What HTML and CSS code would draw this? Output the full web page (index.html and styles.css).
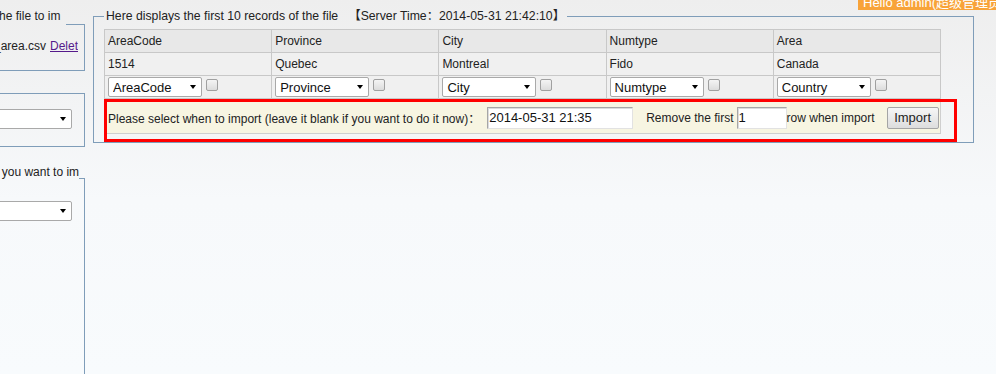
FILE: index.html
```html
<!DOCTYPE html>
<html lang="en">
<head>
    <meta charset="UTF-8">
    <title>Import data</title>
    <link rel="stylesheet" href="styles.css">
</head>
<body>

    <div class="user-bar">Hello admin(超级管理员)</div>

    <div class="layout">
        <!-- 左侧: 选择文件 / 数据表 / 类型 -->
        <div class="side">
            <fieldset class="box box-file">
                <legend>Please select the file to im</legend>
                <div class="file-line">
                    <span>import_area.csv</span>
                    <a href="#" class="del">Delete</a>
                </div>
            </fieldset>

            <fieldset class="box box-table">
                <span class="pick pick-wide">
                    <select><option>area</option></select>
                </span>
            </fieldset>

            <fieldset class="box box-type">
                <legend>Select the type you want to im</legend>
                <span class="pick pick-wide">
                    <select><option>area</option></select>
                </span>
            </fieldset>
        </div>

        <!-- 右侧: 文件预览 -->
        <fieldset class="box preview">
            <legend>Here displays the first 10 records of the file&nbsp;&nbsp;&nbsp;【Server Time：2014-05-31 21:42:10】</legend>

            <table class="grid">
                <tr class="head">
                    <td>AreaCode</td>
                    <td>Province</td>
                    <td>City</td>
                    <td>Numtype</td>
                    <td>Area</td>
                </tr>
                <tr>
                    <td>1514</td>
                    <td>Quebec</td>
                    <td>Montreal</td>
                    <td>Fido</td>
                    <td>Canada</td>
                </tr>
                <tr class="opts">
                    <td><div class="pick-cell"><span class="pick"><select><option>AreaCode</option></select></span><input type="checkbox"></div></td>
                    <td><div class="pick-cell"><span class="pick"><select><option>Province</option></select></span><input type="checkbox"></div></td>
                    <td><div class="pick-cell"><span class="pick"><select><option>City</option></select></span><input type="checkbox"></div></td>
                    <td><div class="pick-cell"><span class="pick"><select><option>Numtype</option></select></span><input type="checkbox"></div></td>
                    <td><div class="pick-cell"><span class="pick"><select><option>Country</option></select></span><input type="checkbox"></div></td>
                </tr>
            </table>

            <div class="import-box">
                <div class="import-bar">
                    <span>Please select when to import (leave it blank if you want to do it now)：</span>
                    <input type="text" class="field time" value="2014-05-31 21:35">
                    <span class="skip">Remove the first</span>
                    <input type="text" class="field rows" value="1">
                    <span>row when import</span>
                    <button class="btn">Import</button>
                </div>
            </div>
        </fieldset>
    </div>

</body>
</html>
```

FILE: styles.css
```css
html, body {
    margin: 0;
    height: 100%;
}

body {
    font-family: "Liberation Sans", "Noto Sans CJK SC", sans-serif;
    font-size: 12px;
    color: #222;
    background: linear-gradient(#eeeeee 0, #f7f9fb 200px, #f8fbfd 100%);
    overflow: hidden;
}

/* 右上角用户条 */
.user-bar {
    position: absolute;
    top: 0;
    right: 0;
    width: 133px;
    height: 10px;
    padding-left: 5px;
    background-color: #f8a339;
    color: #fff;
    font-size: 13px;
    line-height: 5px;
    white-space: nowrap;
    overflow: hidden;
}

.layout {
    display: flex;
    align-items: flex-start;
    gap: 8px;
}

.side {
    flex: none;
    width: 177px;
    margin-left: -92px; /* 左侧栏被截掉一部分 */
}

.box {
    margin: 0;
    border: 1px solid #7f9db9;
    min-inline-size: 0;
}

.box legend {
    padding: 0 2px;
    line-height: 14px;
}

.box-file {
    margin-top: 9px;
    padding: 0 6px 17px 10px;
}

.box-file legend {
    padding: 0 6px 16px 2px;
}

.file-line {
    display: flex;
    justify-content: flex-end;
    gap: 4px;
    line-height: 14px;
    white-space: nowrap;
}

.del {
    display: inline-block;
    width: 28px;
    overflow: hidden;
    color: #551a8b;
}

.box-table {
    margin-top: 22px;
    padding: 15px 12px 17px 10px;
}

.box-type {
    margin-top: 18px;
    padding: 10px 0 0 10px;
    min-height: 220px;
}

.box-type legend {
    padding: 0 0 12px 0;
    white-space: nowrap;
}

.box-type .pick-wide {
    margin-right: 12px;
}

/* 下拉框 */
.pick {
    position: relative;
    display: inline-block;
}

.pick::after {
    content: "";
    position: absolute;
    right: 6px;
    top: 8px;
    border-style: solid;
    border-width: 4px 3px 0 3px;
    border-color: #000 transparent transparent transparent;
    pointer-events: none;
}

.pick select {
    -webkit-appearance: none;
    appearance: none;
    display: block;
    width: 94px;
    height: 20px;
    margin: 0;
    padding: 0 0 0 4px;
    border: 1px solid #a9a9a9;
    border-radius: 2px;
    background-color: #fff;
    font: 13px "Liberation Sans", sans-serif;
    color: #111;
}

.pick-wide {
    display: block;
}

.pick-wide select {
    width: 100%;
}

/* 预览区 */
.preview {
    flex: none;
    width: 881px;
    box-sizing: border-box;
    margin-top: 9px;
    padding: 6px 16px 0 10px;
}

.preview legend {
    font-size: 12.25px;
}

.grid {
    width: 837px;
    border-collapse: collapse;
    table-layout: fixed;
}

.grid td {
    border: 1px solid #c8c8c8;
    padding: 0 3px;
    line-height: 22px;
    background-color: #f0f0f0;
    white-space: nowrap;
}

.grid .head td {
    background-color: #e8e8e8;
}

.grid .opts td {
    padding: 1px 3px;
    line-height: normal;
}

.pick-cell {
    display: flex;
    align-items: flex-start;
    gap: 4px;
}

.pick-cell input[type="checkbox"] {
    -webkit-appearance: none;
    appearance: none;
    width: 12px;
    height: 12px;
    margin: 2px 0 0 0;
    border: 1px solid #a0a0a0;
    border-radius: 2px;
    background: linear-gradient(#f4f4f4, #dcdcdc);
}

/* 导入设置 (红框) */
.import-box {
    width: 853px;
    box-sizing: border-box;
    border: 3px solid #ff0000;
    padding-bottom: 5px;
}

.import-bar {
    display: flex;
    align-items: center;
    width: 834px;
    height: 32px;
    box-sizing: border-box;
    padding-left: 1px;
    background-color: #f7f5e2;
    border-right: 1px solid #cfcfcf;
    border-bottom: 1px solid #cfcfcf;
    white-space: nowrap;
}

.field {
    height: 22px;
    box-sizing: border-box;
    margin: 0;
    padding: 0 1px;
    border: 1px solid #a6a6a6;
    border-right-color: #e2e2e2;
    border-bottom-color: #e2e2e2;
    box-shadow: inset 1px 1px 0 #dcdcdc;
    background-color: #fff;
    font: 13px "Liberation Sans", sans-serif;
    color: #111;
}

.time {
    width: 146px;
    margin-left: 7px;
}

.skip {
    margin-left: 13px;
    margin-right: 3px;
}

.rows {
    width: 50px;
}

.btn {
    width: 52px;
    height: 22px;
    margin-left: 12px;
    padding: 0;
    border: 1px solid #a5a5a5;
    border-radius: 2px;
    background: linear-gradient(#f6f6f6, #dddddd);
    font: 13px "Liberation Sans", sans-serif;
    color: #222;
}
```
